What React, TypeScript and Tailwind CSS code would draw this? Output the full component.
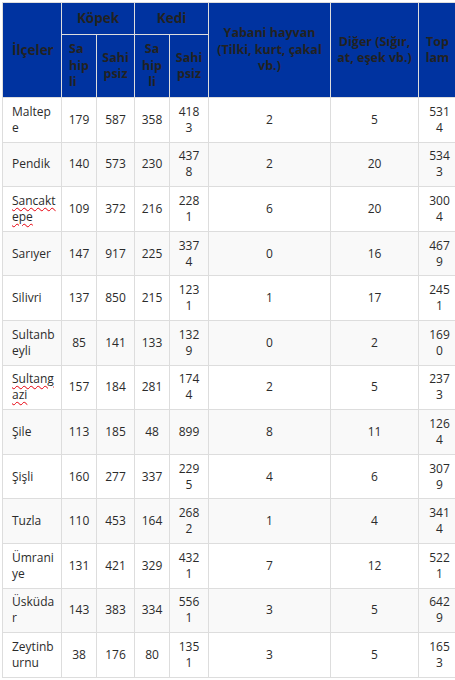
import type { ReactNode } from "react";

type Row = {
  name: string[];
  dogOwned: string;
  dogStray: string;
  catOwned: string;
  catStray: string[];
  wild: string;
  other: string;
  total: string[];
  spell?: boolean;
};

const rows: Row[] = [
  { name: ["Maltep", "e"], dogOwned: "179", dogStray: "587", catOwned: "358", catStray: ["418", "3"], wild: "2", other: "5", total: ["531", "4"] },
  { name: ["Pendik"], dogOwned: "140", dogStray: "573", catOwned: "230", catStray: ["437", "8"], wild: "2", other: "20", total: ["534", "3"] },
  { name: ["Sancakt", "epe"], dogOwned: "109", dogStray: "372", catOwned: "216", catStray: ["228", "1"], wild: "6", other: "20", total: ["300", "4"], spell: true },
  { name: ["Sarıyer"], dogOwned: "147", dogStray: "917", catOwned: "225", catStray: ["337", "4"], wild: "0", other: "16", total: ["467", "9"] },
  { name: ["Silivri"], dogOwned: "137", dogStray: "850", catOwned: "215", catStray: ["123", "1"], wild: "1", other: "17", total: ["245", "1"] },
  { name: ["Sultanb", "eyli"], dogOwned: "85", dogStray: "141", catOwned: "133", catStray: ["132", "9"], wild: "0", other: "2", total: ["169", "0"] },
  { name: ["Sultang", "azi"], dogOwned: "157", dogStray: "184", catOwned: "281", catStray: ["174", "4"], wild: "2", other: "5", total: ["237", "3"], spell: true },
  { name: ["Şile"], dogOwned: "113", dogStray: "185", catOwned: "48", catStray: ["899"], wild: "8", other: "11", total: ["126", "4"] },
  { name: ["Şişli"], dogOwned: "160", dogStray: "277", catOwned: "337", catStray: ["229", "5"], wild: "4", other: "6", total: ["307", "9"] },
  { name: ["Tuzla"], dogOwned: "110", dogStray: "453", catOwned: "164", catStray: ["268", "2"], wild: "1", other: "4", total: ["341", "4"] },
  { name: ["Ümrani", "ye"], dogOwned: "131", dogStray: "421", catOwned: "329", catStray: ["432", "1"], wild: "7", other: "12", total: ["522", "1"] },
  { name: ["Üsküda", "r"], dogOwned: "143", dogStray: "383", catOwned: "334", catStray: ["556", "1"], wild: "3", other: "5", total: ["642", "9"] },
  { name: ["Zeytinb", "urnu"], dogOwned: "38", dogStray: "176", catOwned: "80", catStray: ["135", "1"], wild: "3", other: "5", total: ["165", "3"] },
];

function Lines({ parts }: { parts: string[] }) {
  return (
    <>
      {parts.map((p, i) => (
        <span key={i} className="block whitespace-nowrap">
          {p}
        </span>
      ))}
    </>
  );
}

function Th({ children, className = "", ...rest }: { children: ReactNode; className?: string; rowSpan?: number; colSpan?: number }) {
  return (
    <th {...rest} className={"border border-[#dddddd] align-middle text-[12.5px] font-bold leading-[16.5px] text-[#222222] " + className}>
      {children}
    </th>
  );
}

function Td({ children, className = "" }: { children: ReactNode; className?: string }) {
  return <td className={"border border-[#dddddd] px-1 text-center align-middle " + className}>{children}</td>;
}

export default function App() {
  return (
    <div className="h-[680px] w-[455px] overflow-hidden bg-white pl-[2px] pt-[2px]" style={{ fontFamily: '"Open Sans", "Noto Sans", sans-serif' }}>
      <table className="w-[456px] table-fixed border-collapse text-[12px] leading-[16px] text-[#2b2b2b]">
        <colgroup>
          <col className="w-[59px]" />
          <col className="w-[35px]" />
          <col className="w-[38px]" />
          <col className="w-[35px]" />
          <col className="w-[39px]" />
          <col className="w-[122px]" />
          <col className="w-[88px]" />
          <col className="w-[40px]" />
        </colgroup>
        <thead className="bg-[#0033a0]">
          <tr className="h-[32px]">
            <Th rowSpan={2} className="pl-[9px] text-left text-[13.5px]">
              İlçeler
            </Th>
            <Th colSpan={2} className="text-center text-[13.5px]">
              Köpek
            </Th>
            <Th colSpan={2} className="text-center text-[13.5px]">
              Kedi
            </Th>
            <Th rowSpan={2} className="px-0 text-center">
              <Lines parts={["Yabani hayvan", "(Tilki, kurt, çakal", "vb.)"]} />
            </Th>
            <Th rowSpan={2} className="px-0 text-center">
              <Lines parts={["Diğer (Sığır,", "at, eşek vb.)"]} />
            </Th>
            <Th rowSpan={2} className="px-0 pr-[2px] text-center">
              <Lines parts={["Top", "lam"]} />
            </Th>
          </tr>
          <tr className="h-[63px]">
            <Th className="pl-[7px] pr-0 text-left">
              <Lines parts={["Sa", "hip", "li"]} />
            </Th>
            <Th className="px-0 text-center">
              <Lines parts={["Sahi", "psiz"]} />
            </Th>
            <Th className="px-0 text-center">
              <Lines parts={["Sa", "hip", "li"]} />
            </Th>
            <Th className="px-0 text-center">
              <Lines parts={["Sahi", "psiz"]} />
            </Th>
          </tr>
        </thead>
        <tbody>
          {rows.map((r, i) => (
            <tr key={r.name.join("")} className={"h-[44.6px] " + (i % 2 === 1 ? "bg-[#f9f9f9]" : "bg-white")}>
              <td className="border border-[#dddddd] pl-[9px] pr-1 text-left align-middle">
                <span className={r.spell ? "underline decoration-red-600 decoration-wavy decoration-1 underline-offset-2" : ""}>
                  <Lines parts={r.name} />
                </span>
              </td>
              <Td>{r.dogOwned}</Td>
              <Td>{r.dogStray}</Td>
              <Td>{r.catOwned}</Td>
              <Td>
                <Lines parts={r.catStray} />
              </Td>
              <Td>{r.wild}</Td>
              <Td>{r.other}</Td>
              <Td className="pr-[2px]">
                <Lines parts={r.total} />
              </Td>
            </tr>
          ))}
        </tbody>
      </table>
    </div>
  );
}
